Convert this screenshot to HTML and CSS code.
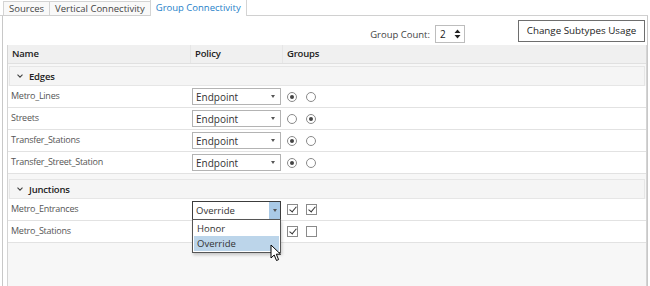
FILE: index.html
```html
<!DOCTYPE html>
<html lang="en">
  <head>
    <meta charset="UTF-8" />
    <title>Group Connectivity</title>
    <link rel="stylesheet" href="styles.css">
  </head>
  <body>
    <div class="tabs">
      <div class="tab">Sources</div>
      <div class="tab">Vertical Connectivity</div>
      <div class="tab active">Group Connectivity</div>
    </div>

    <div class="panel">
      <div class="toolbar">
        <span class="count-label">Group Count:</span>
        <div class="spinner">
          <span>2</span>
          <span class="arrows">
            <svg width="7" height="12" viewBox="0 0 7 12"><path d="M0.5 5 L3.5 1.5 L6.5 5 Z M0.5 7 L3.5 10.5 L6.5 7 Z" fill="#222"/></svg>
          </span>
        </div>
        <button class="btn">Change Subtypes Usage</button>
      </div>

      <div class="grid">
        <div class="grid-head">
          <div class="col name">Name</div>
          <div class="col policy">Policy</div>
          <div class="col groups">Groups</div>
        </div>

        <div class="grid-body">
          <div class="group-head">
            <svg width="6" height="4" viewBox="0 0 6 4"><path d="M0.5 0.7 L3 3.2 L5.5 0.7" fill="none" stroke="#444" stroke-width="1.1"/></svg>
            Edges
          </div>
          <div class="row">
            <div class="cell name">Metro_Lines</div>
            <div class="cell policy"><div class="select">Endpoint<span class="caret"></span></div></div>
            <div class="cell groups"><span class="radio on"></span><span class="radio"></span></div>
          </div>
          <div class="row">
            <div class="cell name">Streets</div>
            <div class="cell policy"><div class="select">Endpoint<span class="caret"></span></div></div>
            <div class="cell groups"><span class="radio"></span><span class="radio on"></span></div>
          </div>
          <div class="row">
            <div class="cell name">Transfer_Stations</div>
            <div class="cell policy"><div class="select">Endpoint<span class="caret"></span></div></div>
            <div class="cell groups"><span class="radio on"></span><span class="radio"></span></div>
          </div>
          <div class="row">
            <div class="cell name">Transfer_Street_Station</div>
            <div class="cell policy"><div class="select">Endpoint<span class="caret"></span></div></div>
            <div class="cell groups"><span class="radio on"></span><span class="radio"></span></div>
          </div>

          <div class="group-head spaced">
            <svg width="6" height="4" viewBox="0 0 6 4"><path d="M0.5 0.7 L3 3.2 L5.5 0.7" fill="none" stroke="#444" stroke-width="1.1"/></svg>
            Junctions
          </div>
          <div class="row">
            <div class="cell name">Metro_Entrances</div>
            <div class="cell policy">
              <div class="select open">Override<span class="drop-btn"><span class="caret"></span></span></div>
              <div class="popup">
                <div class="option">Honor</div>
                <div class="option selected">Override</div>
              </div>
              <svg class="cursor" width="12" height="18" viewBox="0 0 12 18"><path d="M1 1 L1 14 L4.2 11 L6.5 16.5 L8.6 15.6 L6.3 10.2 L10.6 10.2 Z" fill="#fff" stroke="#000" stroke-width="1" stroke-linejoin="round"/></svg>
            </div>
            <div class="cell groups"><span class="check on"></span><span class="check on"></span></div>
          </div>
          <div class="row">
            <div class="cell name">Metro_Stations</div>
            <div class="cell policy"></div>
            <div class="cell groups"><span class="check on"></span><span class="check"></span></div>
          </div>
        </div>
      </div>
    </div>
  </body>
</html>
```

FILE: styles.css
```css
body {
  margin: 0;
  background-color: #fff;
  font-family: "Open Sans", "Noto Sans", sans-serif;
  font-size: 9.5px;
  color: #333;
  width: 650px;
  height: 286px;
  overflow: hidden;
}
.tabs {
  display: flex;
  align-items: flex-end;
  height: 16px;
  padding-left: 3px;
  border-bottom: 1px solid #d0d0d0;
  box-sizing: border-box;
  width: 648px;
}
.tab {
  height: 14px;
  line-height: 13px;
  padding: 0 5px;
  border: 1px solid #d4d4d4;
  border-bottom: none;
  border-right: none;
  background-color: #f9f9f9;
  color: #444;
  box-sizing: border-box;
}
.tab.active {
  height: 17px;
  margin-bottom: -1px;
  line-height: 15px;
  background-color: #fff;
  color: #1f7fc9;
  border-right: 1px solid #d4d4d4;
  padding: 0 5px;
}
.panel {
  margin-left: 2px;
  width: 646px;
  height: 270px;
  border-left: 1px solid #c8c8c8;
  border-right: 1px solid #c8c8c8;
  box-sizing: border-box;
}
.toolbar {
  display: flex;
  align-items: center;
  justify-content: flex-end;
  height: 29px;
  padding-right: 2px;
}
.count-label {
  color: #444;
  margin-right: 5px;
  margin-top: 7px;
}
.spinner {
  display: flex;
  align-items: center;
  justify-content: space-between;
  width: 30px;
  height: 18px;
  margin-top: 7px;
  padding: 0 3px 0 4px;
  border: 1px solid #bdbdbd;
  box-sizing: border-box;
  color: #222;
  font-size: 10px;
}
.arrows {
  display: flex;
}
.btn {
  margin-left: 53px;
  width: 127px;
  height: 22px;
  padding: 0;
  font-family: inherit;
  font-size: 9.8px;
  color: #222;
  background-color: #fff;
  border: 1px solid #6e6e6e;
  border-radius: 0;
}
.grid {
  margin-left: 4px;
  width: 640px;
  height: 241px;
  background-color: #f7f7f7;
  border-left: 1px solid #d4d4d4;
  border-right: 1px solid #d4d4d4;
  box-sizing: border-box;
}
.grid-head,
.row {
  display: grid;
  grid-template-columns: 183px 92px 1fr;
}
.grid-head {
  height: 18px;
  background-color: #f0f0f0;
  border-bottom: 1px solid #e0e0e0;
  font-weight: 600;
  letter-spacing: -0.2px;
  color: #222;
  line-height: 18px;
}
.grid-head .col {
  padding-left: 4px;
  border-right: 1px solid #e6e6e6;
}
.grid-head .col.groups {
  border-right: none;
}
.grid-body {
  padding-top: 2px;
}
.group-head {
  display: flex;
  align-items: center;
  gap: 6px;
  height: 20px;
  padding-left: 7px;
  margin: 0 1px;
  background-color: #f5f5f5;
  border: 1px solid #e6e6e6;
  box-sizing: border-box;
  color: #222;
  font-weight: 600;
  letter-spacing: -0.2px;
}
.group-head.spaced {
  margin-top: 5px;
}
.row {
  height: 22px;
  background-color: #fff;
  border-bottom: 1px solid #e2e2e2;
  box-sizing: border-box;
}
.cell.name {
  padding: 3px 0 0 3px;
  font-size: 9px;
  letter-spacing: -0.25px;
  color: #555;
}
.cell.policy {
  position: relative;
  padding-top: 2px;
}
.select {
  display: flex;
  align-items: center;
  justify-content: space-between;
  width: 89px;
  height: 17px;
  margin-left: 1px;
  padding-left: 3px;
  border: 1px solid #b3b3b3;
  box-sizing: border-box;
  color: #333;
  font-size: 10px;
  background-color: #fff;
}
.caret {
  width: 0;
  height: 0;
  margin-right: 5px;
  border-left: 2px solid transparent;
  border-right: 2px solid transparent;
  border-top: 3px solid #555;
}
.select.open {
  border-color: #3c3c3c;
  height: 19px;
  margin-top: 0;
  font-size: 9.5px;
}
.drop-btn {
  display: flex;
  align-items: center;
  justify-content: center;
  width: 11px;
  height: 100%;
  background-color: #a9c9e6;
}
.drop-btn .caret {
  margin-right: 0;
}
.popup {
  position: absolute;
  left: 1px;
  top: 20px;
  z-index: 2;
  width: 89px;
  padding: 1px;
  background-color: #fff;
  border: 1px solid #555;
  box-sizing: border-box;
  box-shadow: 1px 2px 3px rgba(0, 0, 0, 0.2);
}
.option {
  height: 15px;
  line-height: 15px;
  padding-left: 3px;
  color: #333;
}
.option.selected {
  background-color: #bcd5ea;
}
.cursor {
  position: absolute;
  left: 79px;
  top: 45px;
  z-index: 3;
}
.cell.groups {
  display: flex;
  align-items: center;
  gap: 9px;
  padding-left: 4px;
}
.radio {
  width: 10px;
  height: 10px;
  border: 1px solid #8a8a8a;
  border-radius: 50%;
  box-sizing: border-box;
  position: relative;
  background-color: #fff;
}
.radio.on::after {
  content: "";
  position: absolute;
  left: 2px;
  top: 2px;
  width: 4px;
  height: 4px;
  border-radius: 50%;
  background-color: #444;
}
.check {
  width: 11px;
  height: 11px;
  border: 1px solid #8a8a8a;
  box-sizing: border-box;
  background-color: #fff;
  position: relative;
  margin-right: -1px;
}
.check.on::after {
  content: "";
  position: absolute;
  left: 3px;
  top: 0px;
  width: 3px;
  height: 6px;
  border-right: 1px solid #333;
  border-bottom: 1px solid #333;
  transform: rotate(40deg);
}
```
